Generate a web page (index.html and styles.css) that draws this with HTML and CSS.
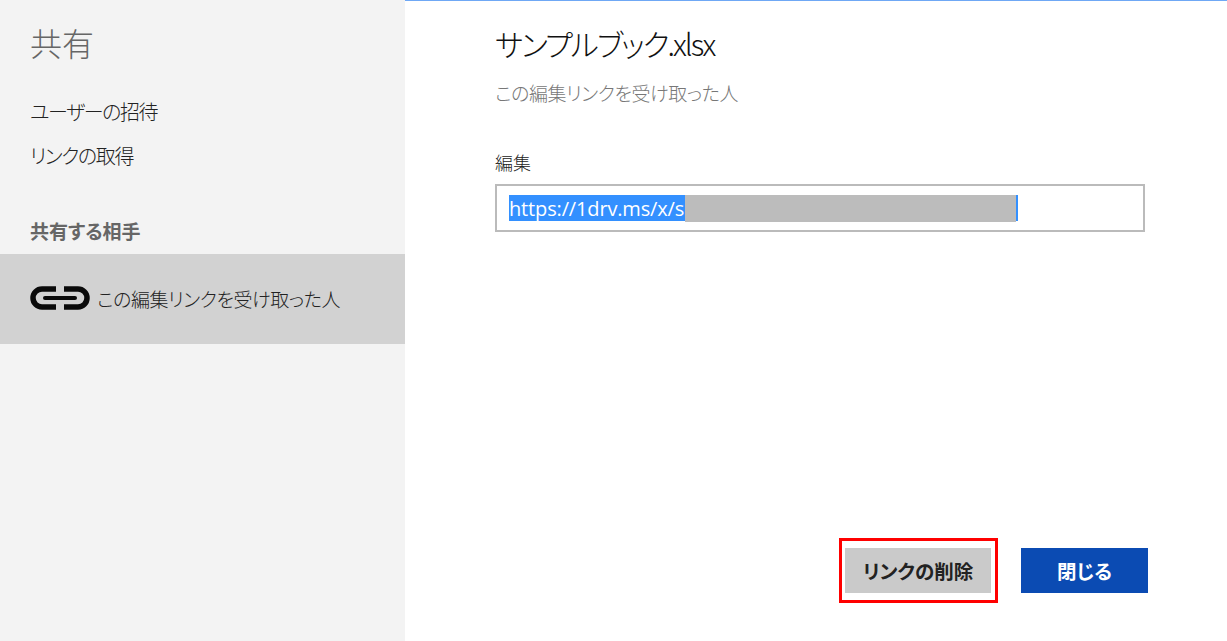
FILE: index.html
```html
<!DOCTYPE html>
<html lang="ja">
<head>
  <title>共有</title>
  <link rel="stylesheet" href="styles.css">
</head>
<body>
  <div class="sidebar">
    <h1>共有</h1>
    <div class="menu-item invite">ユーザーの招待</div>
    <div class="menu-item">リンクの取得</div>
    <h3>共有する相手</h3>
    <div class="shared-row">
      <svg class="link-icon" width="60" height="24" viewBox="0 0 60 24">
        <path d="M26 3H12a9 9 0 0 0 0 18H26" />
        <path d="M34 3H48a9 9 0 0 1 0 18H34" />
        <path class="bar" d="M15 12H45" />
      </svg>
      <span>この編集リンクを受け取った人</span>
    </div>
  </div>

  <div class="main">
    <h2>サンプルブック.xlsx</h2>
    <div class="subtitle">この編集リンクを受け取った人</div>
    <label class="field-label">編集</label>
    <div class="link-box">
      <div class="selected"><span class="url">https://1drv.ms/x/s</span><span class="masked"></span></div>
    </div>
    <div class="buttons">
      <div class="highlight">
        <button class="btn btn-gray">リンクの削除</button>
      </div>
      <button class="btn btn-blue">閉じる</button>
    </div>
  </div>
</body>
</html>
```

FILE: styles.css
```css
* {
  box-sizing: border-box;
}

body {
  margin: 0;
  height: 100vh;
  display: flex;
  overflow: hidden;
  background-color: #fff;
  font-family: "Noto Sans CJK JP", "Open Sans", sans-serif;
  font-feature-settings: "palt";
  color: #222;
}

.sidebar {
  width: 405px;
  flex-shrink: 0;
  background-color: #f3f3f3;
  padding-top: 21px;
}

.sidebar h1 {
  margin: 0 0 0 30px;
  font-size: 32px;
  line-height: 42px;
  font-weight: 300;
  color: #666;
}

.menu-item {
  margin: 0 0 0 30px;
  font-size: 20px;
  line-height: 28px;
  font-weight: 300;
  letter-spacing: -1.4px;
}

.invite {
  margin-top: 35px;
  margin-bottom: 16px;
}

.sidebar h3 {
  margin: 47px 0 0 30px;
  font-size: 19px;
  line-height: 28px;
  font-weight: 700;
  color: #666;
}

.shared-row {
  margin-top: 9px;
  height: 90px;
  background-color: #d2d2d2;
  padding: 0 0 2px 30px;
  display: flex;
  align-items: center;
  gap: 7px;
  font-size: 19px;
  font-weight: 300;
  letter-spacing: -0.4px;
}

.link-icon {
  flex-shrink: 0;
  fill: none;
  stroke: #0a0a0a;
  stroke-width: 5.5;
}

.link-icon .bar {
  stroke-width: 4;
  stroke-linecap: round;
}

.main {
  flex: 1;
  border-top: 1px solid #6fa8f5;
  padding: 21px 79px 0 90px;
  display: flex;
  flex-direction: column;
}

.main h2 {
  margin: 0;
  font-size: 30px;
  line-height: 42px;
  font-weight: 300;
  letter-spacing: -2px;
  color: #111;
}

.subtitle {
  margin-top: 15px;
  font-size: 19px;
  line-height: 28px;
  font-weight: 300;
  letter-spacing: -0.4px;
  color: #777;
}

.field-label {
  margin-top: 43px;
  font-size: 18px;
  line-height: 24px;
  font-weight: 300;
}

.link-box {
  margin-top: 10px;
  width: 650px;
  height: 48px;
  border: 2px solid #bbb;
  padding: 9px 12px;
  display: flex;
}

.selected {
  height: 26px;
  width: 509px;
  background-color: #3390ff;
  display: flex;
}

.url {
  width: 176px;
  font-family: "Open Sans", sans-serif;
  font-size: 20px;
  line-height: 28px;
  letter-spacing: -0.15px;
  color: #fff;
  white-space: nowrap;
  overflow: hidden;
}

.masked {
  width: 331px;
  height: 27px;
  background-color: #bcbcbc;
}

.buttons {
  margin-top: 306px;
  display: flex;
  justify-content: flex-end;
  align-items: center;
  gap: 23px;
}

.highlight {
  border: 3px solid #f00;
  padding: 7px 4px 7px 3px;
}

.btn {
  display: block;
  height: 45px;
  border: none;
  padding: 0;
  font-family: inherit;
  font-feature-settings: inherit;
  font-size: 19.5px;
  font-weight: 700;
}

.btn-gray {
  width: 146px;
  background-color: #cacaca;
  color: #222;
}

.btn-blue {
  width: 127px;
  background-color: #0b4bb3;
  color: #fff;
}
```
